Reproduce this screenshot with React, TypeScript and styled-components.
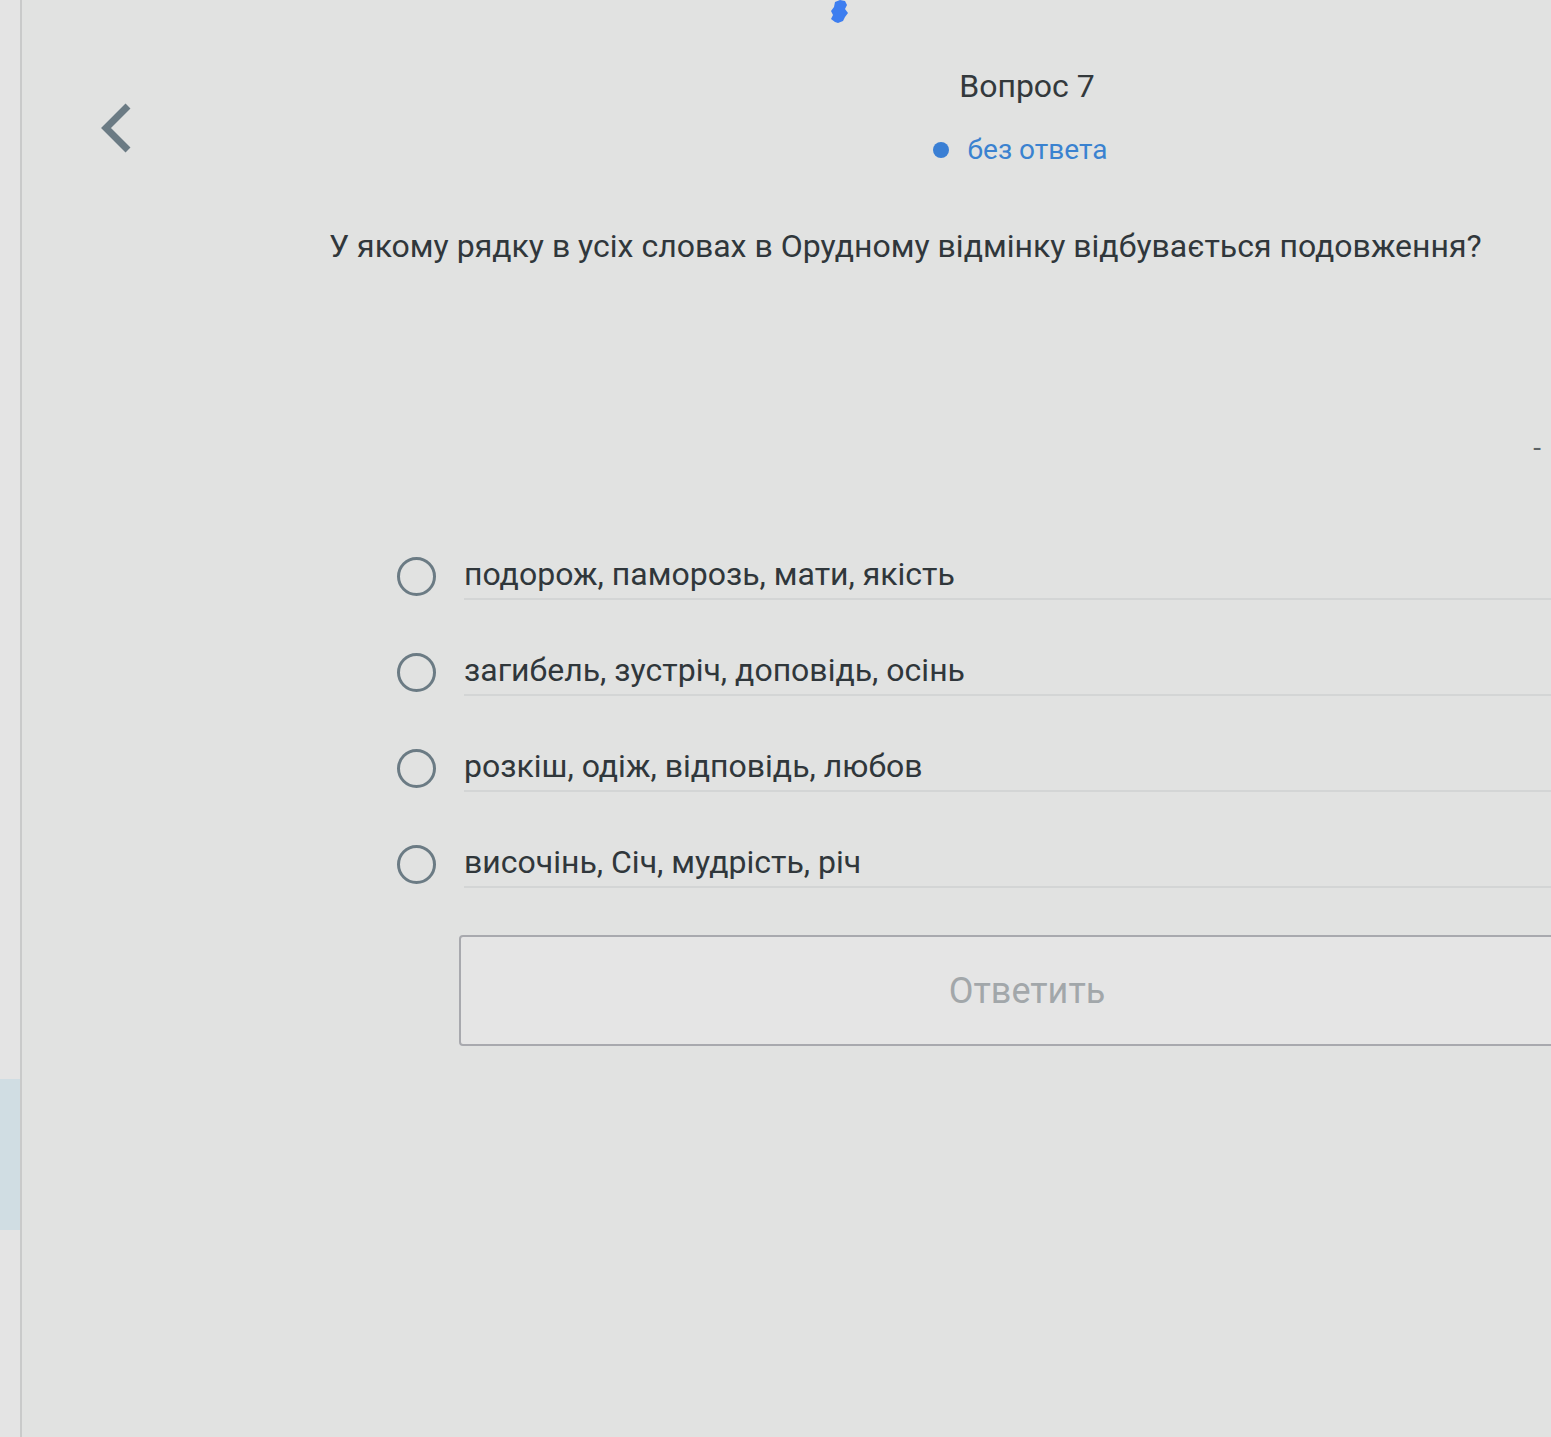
import React from 'react';
import styled, { createGlobalStyle } from 'styled-components';

const GlobalStyle = createGlobalStyle`
  html, body {
    margin: 0;
    padding: 0;
    background: #e1e2e1;
    overflow: hidden;
  }
  body {
    font-family: Roboto, "Noto Sans", "Liberation Sans", sans-serif;
  }
`;

const Screen = styled.div`
  display: flex;
  width: 1551px;
  height: 1437px;
  overflow: hidden;
  background: #e1e2e1;
`;

const Sidebar = styled.div`
  flex: 0 0 20px;
  display: flex;
  flex-direction: column;
  padding-top: 1079px;
  background: #e4e4e4;
  border-right: 2px solid #c9caca;
`;

const SidebarActive = styled.div`
  height: 151px;
  background: #d0dde3;
`;

const Main = styled.div`
  position: relative;
  flex: 1;
  min-width: 0;
  display: flex;
  flex-direction: column;
`;

const Blob = styled.svg`
  position: absolute;
  left: 804px;
  top: 0;
`;

const TopRow = styled.div`
  display: flex;
  align-items: flex-start;
  height: 200px;
`;

const BackButton = styled.button`
  display: flex;
  margin: 102px 0 0 76px;
  padding: 0;
  border: none;
  background: none;
  cursor: pointer;
`;

const Heading = styled.div`
  display: flex;
  flex-direction: column;
  align-items: center;
  flex: 0 0 1136px;
  margin-left: 325px;
  padding-top: 66px;
`;

const Title = styled.div`
  font-size: 32px;
  line-height: 40px;
  color: #33393c;
`;

const Status = styled.div`
  display: flex;
  align-items: center;
  gap: 19px;
  margin: 29px 14px 0 0;
  font-size: 28px;
  line-height: 30px;
  color: #3a82d0;
`;

const Dot = styled.span`
  width: 16px;
  height: 16px;
  border-radius: 50%;
  background: #3a7fd4;
`;

const Question = styled.div`
  margin: 26px 0 0 307px;
  font-size: 32px;
  line-height: 40px;
  color: #30373b;
  white-space: nowrap;
`;

const Dash = styled.div`
  align-self: flex-end;
  margin: 168px 10px 0 0;
  font-size: 28px;
  line-height: 28px;
  color: #5d6366;
`;

const Options = styled.div`
  display: flex;
  flex-direction: column;
  gap: 48px;
  margin: 90px 0 0 375px;
`;

const Option = styled.label`
  display: flex;
  align-items: center;
  height: 48px;
  cursor: pointer;
`;

const Radio = styled.span`
  flex: 0 0 auto;
  box-sizing: border-box;
  width: 39px;
  height: 39px;
  border-radius: 50%;
  border: 3px solid #6b7b84;
  margin-right: 28px;
`;

const OptionText = styled.span`
  flex: 1;
  box-sizing: border-box;
  display: flex;
  align-items: center;
  height: 48px;
  padding-bottom: 2px;
  font-size: 32px;
  color: #30373b;
  border-bottom: 2px solid #d3d5d5;
  white-space: nowrap;
`;

const SubmitButton = styled.button`
  box-sizing: border-box;
  flex: 0 0 auto;
  width: 1136px;
  height: 111px;
  margin: 47px 0 0 437px;
  border: 2px solid #a8a9ae;
  border-radius: 4px;
  background: #e5e5e5;
  font-family: Roboto, "Noto Sans", "Liberation Sans", sans-serif;
  font-size: 36px;
  color: #a2a7aa;
  cursor: default;
`;

const answers = [
  'подорож, паморозь, мати, якість',
  'загибель, зустріч, доповідь, осінь',
  'розкіш, одіж, відповідь, любов',
  'височінь, Січ, мудрість, річ',
];

export default function App() {
  return (
    <Screen>
      <GlobalStyle />
      <Sidebar>
        <SidebarActive />
      </Sidebar>
      <Main>
        <Blob width="26" height="24" viewBox="0 0 26 24">
          <path
            d="M9 22 L5 19 L7 15 L5 11 L8 7 L9 2 L14 0 L19 1 L21 5 L19 9 L22 13 L19 17 L17 21 L12 23 Z"
            fill="#3d7ef0"
          />
        </Blob>
        <TopRow>
          <BackButton type="button" aria-label="Назад">
            <svg width="36" height="52" viewBox="0 0 36 52">
              <path
                d="M30 4 L8 26 L30 48"
                fill="none"
                stroke="#6b7b84"
                strokeWidth="7"
              />
            </svg>
          </BackButton>
          <Heading>
            <Title>Вопрос 7</Title>
            <Status>
              <Dot />
              без ответа
            </Status>
          </Heading>
        </TopRow>
        <Question>
          У якому рядку в усіх словах в Орудному відмінку відбувається подовження?
        </Question>
        <Dash>-</Dash>
        <Options>
          {answers.map((answer) => (
            <Option key={answer}>
              <Radio />
              <OptionText>{answer}</OptionText>
            </Option>
          ))}
        </Options>
        <SubmitButton type="button">Ответить</SubmitButton>
      </Main>
    </Screen>
  );
}
